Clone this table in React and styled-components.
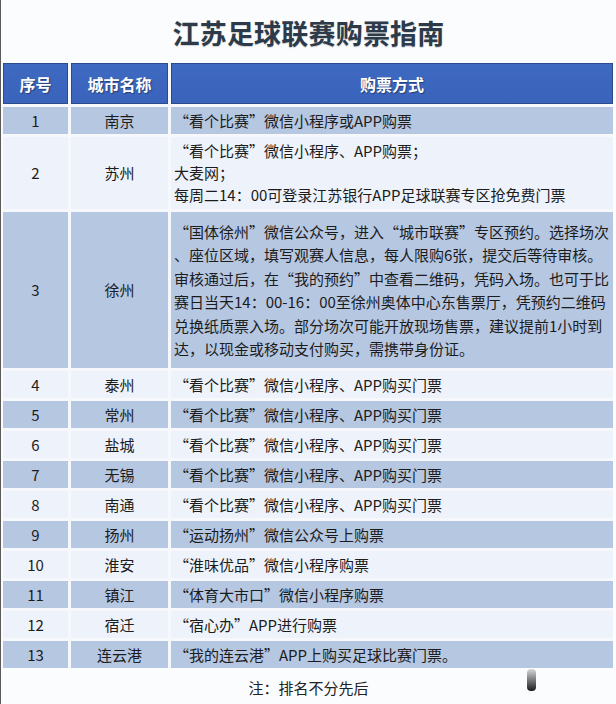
import React from "react";
import styled, { createGlobalStyle } from "styled-components";

const GlobalStyle = createGlobalStyle`
  html, body {
    margin: 0;
    padding: 0;
    background: #fbfcfd;
  }
  body {
    font-family: "Noto Sans CJK SC", "Noto Sans", "Liberation Sans", sans-serif;
    color: #1c1c1c;
  }
`;

const Page = styled.div`
  position: relative;
  width: 616px;
  height: 704px;
  box-sizing: border-box;
  border-left: 1px solid #5a5a5a;
  background: #fbfcfd;
  display: flex;
  flex-direction: column;
  overflow: hidden;
`;

const Title = styled.h1`
  margin: 0;
  padding-top: 17px;
  height: 63px;
  box-sizing: border-box;
  text-align: center;
  font-size: 27px;
  line-height: 32px;
  font-weight: 700;
  color: #2c3a4a;
  letter-spacing: 0.2px;
  text-shadow: 0 1px 1px rgba(0, 0, 0, 0.18);
`;

const Table = styled.div`
  display: grid;
  grid-template-columns: 65px 97px 1fr;
  gap: 3px;
  margin: 0 3px 0 2px;
  background: #f6f8fb;
`;

const HeaderCell = styled.div`
  height: 41px;
  box-sizing: border-box;
  display: flex;
  align-items: center;
  justify-content: center;
  background: linear-gradient(#3f6ac2, #3a63bb);
  border: 1px solid #2b4c8c;
  color: #ffffff;
  font-size: 16px;
  font-weight: 700;
  text-shadow: 1px 1px 1px rgba(20, 30, 60, 0.55);
`;

const Cell = styled.div`
  min-height: ${(p) => p.$h}px;
  box-sizing: border-box;
  display: flex;
  flex-direction: column;
  justify-content: center;
  align-items: ${(p) => (p.$left ? "flex-start" : "center")};
  padding: ${(p) => (p.$left ? "0 0 0 3px" : "0")};
  background: ${(p) => (p.$dark ? "#b6c7e2" : "#eef2fa")};
  font-size: 15px;
  line-height: ${(p) => p.$lh || 22}px;
  color: #1c1c1c;
`;

const Line = styled.span`
  display: block;
  white-space: nowrap;
`;

const Note = styled.div`
  text-align: center;
  font-size: 15px;
  line-height: 20px;
  padding-top: 10px;
  color: #222;
`;

const Watermark = styled.svg`
  position: absolute;
  left: 524px;
  top: 669px;
`;

const rows = [
  { n: "1", city: "南京", lines: ["“看个比赛”微信小程序或APP购票"], h: 27 },
  {
    n: "2",
    city: "苏州",
    lines: [
      "“看个比赛”微信小程序、APP购票；",
      "大麦网；",
      "每周二14：00可登录江苏银行APP足球联赛专区抢免费门票",
    ],
    h: 72,
  },
  {
    n: "3",
    city: "徐州",
    lines: [
      "“国体徐州”微信公众号，进入“城市联赛”专区预约。选择场次",
      "、座位区域，填写观赛人信息，每人限购6张，提交后等待审核。",
      "审核通过后，在“我的预约”中查看二维码，凭码入场。也可于比",
      "赛日当天14：00-16：00至徐州奥体中心东售票厅，凭预约二维码",
      "兑换纸质票入场。部分场次可能开放现场售票，建议提前1小时到",
      "达，以现金或移动支付购买，需携带身份证。",
    ],
    h: 156,
    lh: 23.5,
  },
  { n: "4", city: "泰州", lines: ["“看个比赛”微信小程序、APP购买门票"], h: 27 },
  { n: "5", city: "常州", lines: ["“看个比赛”微信小程序、APP购买门票"], h: 27 },
  { n: "6", city: "盐城", lines: ["“看个比赛”微信小程序、APP购买门票"], h: 27 },
  { n: "7", city: "无锡", lines: ["“看个比赛”微信小程序、APP购买门票"], h: 27 },
  { n: "8", city: "南通", lines: ["“看个比赛”微信小程序、APP购买门票"], h: 27 },
  { n: "9", city: "扬州", lines: ["“运动扬州”微信公众号上购票"], h: 27 },
  { n: "10", city: "淮安", lines: ["“淮味优品”微信小程序购票"], h: 27 },
  { n: "11", city: "镇江", lines: ["“体育大市口”微信小程序购票"], h: 27 },
  { n: "12", city: "宿迁", lines: ["“宿心办”APP进行购票"], h: 27 },
  { n: "13", city: "连云港", lines: ["“我的连云港”APP上购买足球比赛门票。"], h: 27 },
];

export default function App() {
  return (
    <>
      <GlobalStyle />
      <Page>
        <Title>江苏足球联赛购票指南</Title>
        <Table>
          <HeaderCell>序号</HeaderCell>
          <HeaderCell>城市名称</HeaderCell>
          <HeaderCell>购票方式</HeaderCell>
          {rows.map((r, i) => {
            const dark = i % 2 === 0;
            return (
              <React.Fragment key={r.n}>
                <Cell $dark={dark} $h={r.h}>{r.n}</Cell>
                <Cell $dark={dark} $h={r.h}>{r.city}</Cell>
                <Cell $dark={dark} $h={r.h} $left $lh={r.lh}>
                  {r.lines.map((l, j) => (
                    <Line key={j}>{l}</Line>
                  ))}
                </Cell>
              </React.Fragment>
            );
          })}
        </Table>
        <Note>注：排名不分先后</Note>
        <Watermark width="14" height="24" viewBox="0 0 14 24">
          <defs>
            <linearGradient id="wm" x1="0" y1="0" x2="0" y2="1">
              <stop offset="0" stopColor="#d8d8d8" />
              <stop offset="1" stopColor="#1a1a1a" />
            </linearGradient>
          </defs>
          <rect x="2" y="0" width="9" height="22" rx="4" fill="url(#wm)" />
        </Watermark>
      </Page>
    </>
  );
}
